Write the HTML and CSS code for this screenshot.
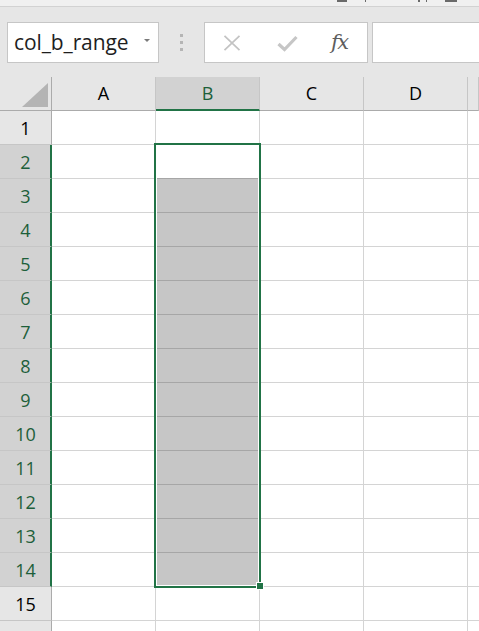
FILE: index.html
```html
<!DOCTYPE html>
<html>
<head>
<meta charset="utf-8">
<link rel="stylesheet" href="styles.css">
</head>
<body>
<div class="app">
  <div class="topstrip">
    <i class="bit b1"></i><i class="bit b2"></i><i class="bit b3"></i><i class="bit b4"></i><i class="bit b5"></i>
  </div>
  <div class="toolbar">
    <div class="namebox"><span class="nametext">col_b_range</span><span class="caret"></span></div>
    <div class="sep"><i></i><i></i><i></i></div>
    <div class="fbtns">
      <svg class="ic-x" width="18" height="16" viewBox="0 0 18 16"><path d="M1.5 0.8 L16.5 15.2 M16.5 0.8 L1.5 15.2" stroke="#c3c3c3" stroke-width="1.7" fill="none"/></svg>
      <svg class="ic-check" width="21" height="17" viewBox="0 0 21 17"><path d="M1.5 9 L7.5 14.5 L19.5 2" stroke="#c6c6c6" stroke-width="3.2" fill="none"/></svg>
      <span class="fx">fx</span>
    </div>
    <div class="finput"></div>
  </div>
  <div class="sheet">
    <div class="grid">
      <div class="corner"><svg width="51" height="33" viewBox="0 0 51 33"><polygon points="48,6 48,30 22,30" fill="#b4b4b4"/></svg></div>
      <div class="ch">A</div><div class="ch sel">B</div><div class="ch">C</div><div class="ch">D</div><div class="ch last"></div>

      <div class="rh">1</div><div class="c"></div><div class="c"></div><div class="c"></div><div class="c"></div><div class="c last"></div>
      <div class="rh sel">2</div><div class="c"></div><div class="c active"></div><div class="c"></div><div class="c"></div><div class="c last"></div>
      <div class="rh sel">3</div><div class="c"></div><div class="c shade"></div><div class="c"></div><div class="c"></div><div class="c last"></div>
      <div class="rh sel">4</div><div class="c"></div><div class="c shade"></div><div class="c"></div><div class="c"></div><div class="c last"></div>
      <div class="rh sel">5</div><div class="c"></div><div class="c shade"></div><div class="c"></div><div class="c"></div><div class="c last"></div>
      <div class="rh sel">6</div><div class="c"></div><div class="c shade"></div><div class="c"></div><div class="c"></div><div class="c last"></div>
      <div class="rh sel">7</div><div class="c"></div><div class="c shade"></div><div class="c"></div><div class="c"></div><div class="c last"></div>
      <div class="rh sel">8</div><div class="c"></div><div class="c shade"></div><div class="c"></div><div class="c"></div><div class="c last"></div>
      <div class="rh sel">9</div><div class="c"></div><div class="c shade"></div><div class="c"></div><div class="c"></div><div class="c last"></div>
      <div class="rh sel">10</div><div class="c"></div><div class="c shade"></div><div class="c"></div><div class="c"></div><div class="c last"></div>
      <div class="rh sel">11</div><div class="c"></div><div class="c shade"></div><div class="c"></div><div class="c"></div><div class="c last"></div>
      <div class="rh sel">12</div><div class="c"></div><div class="c shade"></div><div class="c"></div><div class="c"></div><div class="c last"></div>
      <div class="rh sel">13</div><div class="c"></div><div class="c shade"></div><div class="c"></div><div class="c"></div><div class="c last"></div>
      <div class="rh sel">14</div><div class="c"></div><div class="c shade end"></div><div class="c"></div><div class="c"></div><div class="c last"></div>
      <div class="rh">15</div><div class="c"></div><div class="c"></div><div class="c"></div><div class="c"></div><div class="c last"></div>
      <div class="rh"></div><div class="c"></div><div class="c"></div><div class="c"></div><div class="c"></div><div class="c last"></div>
    </div>
    <div class="selection"></div>
    <div class="handle"></div>
  </div>
</div>
</body>
</html>
```
FILE: styles.css
```css
* { box-sizing: border-box; }
html, body { margin: 0; padding: 0; }
body {
  width: 479px;
  height: 631px;
  overflow: hidden;
  background: #ffffff;
  font-family: "Open Sans", "Noto Sans", sans-serif;
}
.app {
  width: 479px;
  height: 631px;
  overflow: hidden;
  display: flex;
  flex-direction: column;
}
.topstrip {
  height: 7px;
  background: #f0f0f0;
  border-bottom: 1px solid #d2d2d2;
  display: flex;
  align-items: flex-start;
  flex-shrink: 0;
}
.bit { display: block; height: 2px; background: #6a6a6a; flex-shrink: 0; }
.b1 { margin-left: 337px; width: 10px; }
.b2 { margin-left: 18px; width: 1px; }
.b3 { margin-left: 52px; width: 2px; }
.b4 { margin-left: 6px; width: 1px; }
.b5 { margin-left: 18px; width: 12px; }

.toolbar {
  height: 70px;
  background: #e6e6e6;
  display: flex;
  align-items: flex-start;
  padding-top: 15px;
  padding-left: 7px;
  flex-shrink: 0;
  overflow: hidden;
}
.toolbar > * { flex-shrink: 0; }
.namebox {
  width: 152px;
  height: 41px;
  background: #ffffff;
  border: 1px solid #c6c6c6;
  display: flex;
  align-items: center;
  padding-left: 6px;
  position: relative;
}
.nametext {
  font-size: 21px;
  color: #1e1e1e;
  line-height: 1;
  margin-top: 0px;
  letter-spacing: -0.1px;
}
.caret {
  position: absolute;
  left: 136px;
  top: 16px;
  width: 0;
  height: 0;
  border-left: 3px solid transparent;
  border-right: 3px solid transparent;
  border-top: 3px solid #7a7a7a;
}
.sep {
  width: 45px;
  height: 41px;
  display: flex;
  flex-direction: column;
  align-items: center;
  justify-content: center;
  gap: 4px;
  padding-right: 1px;
}
.sep i { display: block; width: 3px; height: 3px; background: #b5b5b5; }
.fbtns {
  width: 164px;
  height: 41px;
  background: #ffffff;
  border: 1px solid #c6c6c6;
  display: flex;
  align-items: center;
  padding-left: 18px;
}
.ic-x { display: block; margin-top: 1px; flex-shrink: 0; }
.ic-check { display: block; margin-left: 36px; margin-top: 1px; flex-shrink: 0; }
.fx {
  margin-left: 33px;
  font-family: "DejaVu Serif", "Liberation Serif", serif;
  font-style: italic;
  font-size: 21px;
  color: #5e5e5e;
  line-height: 1;
  letter-spacing: -1.5px;
  margin-top: -1px;
}
.finput {
  margin-left: 4px;
  width: 120px;
  height: 41px;
  background: #ffffff;
  border: 1px solid #c6c6c6;
  border-right: none;
}

.sheet {
  position: relative;
  flex: 1;
  overflow: hidden;
}
.grid {
  display: grid;
  grid-template-columns: 52px 104px 104px 104px 104px 11px;
  grid-template-rows: repeat(17, 34px);
}
.corner {
  background: #e6e6e6;
  border-right: 1px solid #ababab;
  border-bottom: 1px solid #ababab;
}
.corner svg { display: block; }
.ch {
  background: #e6e6e6;
  border-right: 1px solid #c6c6c6;
  border-bottom: 1px solid #ababab;
  display: flex;
  align-items: center;
  justify-content: center;
  font-size: 18px;
  color: #000000;
  padding-bottom: 1px;
}
.ch.sel {
  background: #d2d2d2;
  color: #1d5f3a;
  border-bottom: 2px solid #217346;
  padding-bottom: 0;
}
.rh {
  background: #e6e6e6;
  border-right: 1px solid #ababab;
  border-bottom: 1px solid #c6c6c6;
  display: flex;
  align-items: center;
  justify-content: center;
  font-size: 18px;
  color: #000000;
  padding-top: 1px;
}
.rh.sel {
  background: #d2d2d2;
  color: #1d5f3a;
  border-right: 2px solid #217346;
  padding-left: 1px;
}
.c {
  background: #ffffff;
  border-right: 1px solid #d4d4d4;
  border-bottom: 1px solid #d4d4d4;
}
.c.last { border-right: none; }
.c.active { border-bottom-color: #a6a6a6; }
.c.shade { background: #c6c6c6; border-bottom-color: #a6a6a6; }
.c.shade.end { border-bottom-color: #d4d4d4; }

.selection {
  position: absolute;
  left: 154px;
  top: 66px;
  width: 107px;
  height: 445px;
  border: 2px solid #217346;
  box-shadow: inset 0 0 0 1px #ffffff;
  pointer-events: none;
}
.handle {
  position: absolute;
  left: 256px;
  top: 505px;
  width: 8px;
  height: 8px;
  background: #217346;
  border: 1px solid #ffffff;
}
```
